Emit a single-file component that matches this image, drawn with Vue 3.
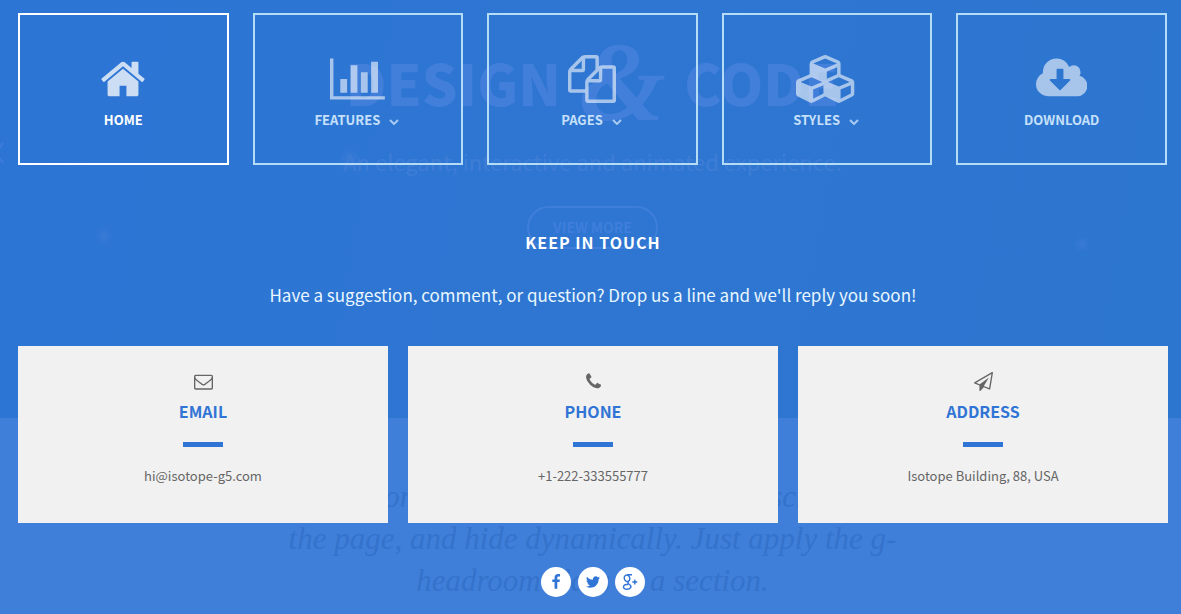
<script setup>
const navItems = [
  {
    label: 'Home', active: true, width: 1792,
    icon: 'M1472 992v480q0 26-19 45t-45 19h-384v-384h-256v384h-384q-26 0-45-19t-19-45v-480q0-1 .5-3t.5-3l575-474 575 474q1 2 1 6zm223-69l-62 74q-8 9-21 11h-3q-13 0-21-7l-692-577-692 577q-12 8-24 7-13-2-21-11l-62-74q-8-10-7-23.5t11-21.5l719-599q32-26 76-26t76 26l244 204v-195q0-14 9-23t23-9h192q14 0 23 9t9 23v408l219 182q10 8 11 21.5t-7 23.5z',
  },
  {
    label: 'Features', menu: true, width: 2048,
    icon: 'M640 896v512h-256v-512h256zm384-512v1024h-256v-1024h256zm1024 1152v128h-2048v-1536h128v1408h1920zm-640-896v768h-256v-768h256zm384-384v1152h-256v-1152h256z',
  },
  {
    label: 'Pages', menu: true, width: 1792,
    icon: 'M1696 384q40 0 68 28t28 68v1216q0 40-28 68t-68 28h-960q-40 0-68-28t-28-68v-288h-544q-40 0-68-28t-28-68v-672q0-40 20-88t48-76l408-408q28-28 76-48t88-20h416q40 0 68 28t28 68v328q68-40 128-40h416zm-544 213l-299 299h299v-299zm-640-384l-299 299h299v-299zm196 647l316-316v-416h-384v416q0 40-28 68t-68 28h-416v640h512v-256q0-40 20-88t48-76zm956 804v-1152h-384v416q0 40-28 68t-68 28h-416v640h896z',
  },
  {
    label: 'Styles', menu: true, width: 2304,
    icon: 'M640 1632l384-192v-314l-384 164v342zm-64-454l404-173-404-173-404 173zm1088 454l384-192v-314l-384 164v342zm-64-454l404-173-404-173-404 173zm-448-293l384-165v-266l-384 164v267zm-64-379l441-189-441-189-441 189zm1088 518v416q0 36-19 67t-52 47l-448 224q-25 14-57 14t-57-14l-448-224q-4-2-7-4-2 2-7 4l-448 224q-25 14-57 14t-57-14l-448-224q-33-16-52-47t-19-67v-416q0-38 21.5-70t56.5-48l434-186v-400q0-38 21.5-70t56.5-48l448-192q23-10 50-10t50 10l448 192q35 16 56.5 48t21.5 70v400l434 186q36 16 57 48t21 70z',
  },
  {
    label: 'Download', width: 1920,
    icon: 'M1280 928q0-14-9-23t-23-9h-224v-352q0-13-9.5-22.5t-22.5-9.5h-192q-13 0-22.5 9.5t-9.5 22.5v352h-224q-13 0-22.5 9.5t-9.5 22.5q0 14 9 23l352 352q9 9 23 9t23-9l351-351q10-12 10-24zm640 224q0 159-112.5 271.5t-271.5 112.5h-1088q-185 0-316.5-131.5t-131.5-316.5q0-130 70-240t188-165q-2-30-2-43 0-212 150-362t362-150q156 0 285.5 87t188.5 231q71-62 166-62 106 0 181 75t75 181q0 76-41 138 130 31 213.5 135.5t83.5 238.5z',
  },
]

const contacts = [
  {
    title: 'Email', text: 'hi@isotope-g5.com',
    icon: 'M1664 1504v-768q-32 36-69 66-268 206-426 338-51 43-83 67t-86.500 48.500-102.500 24.500h-2q-48 0-102.500-24.500t-86.500-48.500-83-67q-158-132-426-338-37-30-69-66v768q0 13 9.500 22.500t22.500 9.500h1472q13 0 22.500-9.500t9.500-22.500zm0-1051v-24.500l-.5-13-3-12.500-5.500-9-9-7.500-14-2.500h-1472q-13 0-22.500 9.500t-9.500 22.500q0 168 147 284 193 152 401 317 6 5 35 29.500t46 37.500 44.500 31.500 50.500 27.500 43 9h2q20 0 43-9t50.500-27.500 44.500-31.500 46-37.500 35-29.500q208-165 401-317 54-43 100.500-115.500t46.500-131.500zm128-37v1088q0 66-47 113t-113 47h-1472q-66 0-113-47t-47-113v-1088q0-66 47-113t113-47h1472q66 0 113 47t47 113z',
  },
  {
    title: 'Phone', text: '+1-222-333555777',
    icon: 'M1600 1240q0 27-10 70.500t-21 68.500q-21 50-122 106-94 51-186 51-27 0-53-3.500t-57.500-12.500-47-14.500-55.500-20.500-49-18q-98-35-175-83-127-79-264-216t-216-264q-48-77-83-175-3-9-18-49t-20.500-55.500-14.500-47-12.500-57.500-3.500-53q0-92 51-186 56-101 106-122 25-11 68.500-21t70.500-10q14 0 21 3 18 6 53 76 11 19 30 54t35 63.500 31 53.500q3 4 17.500 25t21.500 35.500 7 28.500q0 20-28.500 50t-62 55-62 53-28.500 46q0 9 5 22.500t8.500 20.500 14 24 11.500 19q76 137 174 235t235 174q2 1 19 11.500t24 14 20.500 8.500 22.500 5q18 0 46-28.500t53-62 55-62 50-28.500q14 0 28.500 7t35.500 21.500 25 17.500q25 15 53.500 31t63.500 35 54 30q70 35 76 53 3 7 3 21z',
  },
  {
    title: 'Address', text: 'Isotope Building, 88, USA',
    icon: 'M1764 11q33 24 27 64l-256 1536q-5 29-32 45-14 8-31 8-11 0-24-5l-527-215-298 327q-18 21-47 21-14 0-23-4-19-7-30-23.500t-11-36.500v-452l-472-193q-37-14-40-55-3-39 32-59l1664-960q35-21 68 2zm-342 1499l221-1323-1434 827 336 137 863-639-478 797z',
  },
]
</script>

<template>
  <div class="page">
    <div class="backdrop" aria-hidden="true">
      <section class="hero">
        <svg class="prev" viewBox="0 0 6 22"><path d="M3 1L-4 11L3 21" /></svg>
        <h1 class="hero-title"><span>DESIGN</span><span class="amp">&amp;</span><span>CODE</span></h1>
        <p class="hero-sub">An elegant, interactive and animated experience.</p>
        <span class="hero-more">VIEW MORE</span>
      </section>
      <section class="quote">
        <p class="quote-first"><span>headroom</span><span>scroll to</span></p>
        <p>the page, and hide dynamically. Just apply the g-</p>
        <p>headroom class to a section.</p>
      </section>
    </div>

    <div class="overlay">
      <nav class="nav">
        <a
          v-for="item in navItems"
          :key="item.label"
          href="#"
          class="tile"
          :class="{ active: item.active }"
        >
          <svg class="tile-icon" :viewBox="`0 0 ${item.width} 1792`" aria-hidden="true"><path :d="item.icon" /></svg>
          <span class="tile-label">
            {{ item.label }}
            <svg v-if="item.menu" class="chevron" viewBox="0 0 10 6" aria-hidden="true"><path d="M1 1L5 5L9 1" /></svg>
          </span>
        </a>
      </nav>

      <main>
        <h2 class="heading">Keep in touch</h2>
        <p class="lead">Have a suggestion, comment, or question? Drop us a line and we'll reply you soon!</p>
        <div class="cards">
          <article v-for="card in contacts" :key="card.title" class="card">
            <svg class="card-icon" viewBox="0 0 1792 1792" aria-hidden="true"><path :d="card.icon" /></svg>
            <h3>{{ card.title }}</h3>
            <p>{{ card.text }}</p>
          </article>
        </div>
      </main>

      <footer class="social">
        <a href="#" aria-label="Facebook">
          <svg viewBox="0 0 1792 1792"><path d="M1343 12v264h-157q-86 0-116 36t-30 108v189h293l-39 296h-254v759h-306v-759h-255v-296h255v-218q0-186 104-288.500t277-102.500q147 0 228 12z" /></svg>
        </a>
        <a href="#" aria-label="Twitter">
          <svg viewBox="0 0 1792 1792"><path d="M1684 408q-67 98-162 167 1 14 1 42 0 130-38 259.500t-115.500 248.500-184.500 210.500-258 146-323 54.500q-271 0-496-145 35 4 78 4 225 0 401-138-105-2-188-64.500t-114-159.500q33 5 61 5 43 0 85-11-112-23-185.500-111.500t-73.500-205.500v-4q68 38 146 41-66-44-105-115t-39-154q0-88 44-163 121 149 294.500 238.500t371.500 99.500q-8-38-8-74 0-134 94.500-228.500t228.500-94.500q140 0 236 102 109-21 205-78-37 115-142 178 93-10 186-50z" /></svg>
        </a>
        <a href="#" aria-label="Google Plus">
          <svg class="gplus" viewBox="0 0 16 16">
            <ellipse cx="5" cy="4.300" rx="2.700" ry="3.300" transform="rotate(-14 5 4.300)" />
            <path d="M10 .8H5M7 7.200C5.500 8.500 5.500 8.800 7 10C11 12.800 8 15.300 4.800 15.300C.2 15.300 0 10.200 6.400 10.200" />
            <path d="M12.800 5.500v5M10.300 8h5" />
          </svg>
        </a>
      </footer>
    </div>
  </div>
</template>

<style>
body {
  background: #3f7fda;
}
</style>

<style scoped>
.page {
  position: relative;
  min-height: 100vh;
  overflow: hidden;
  font-family: "Noto Sans CJK SC", "Noto Sans", sans-serif;
  text-align: center;
  color: #fff;
}

h1, h2, h3, p {
  margin: 0;
}

.backdrop {
  position: absolute;
  inset: 0;
  overflow: hidden;
  background: #3f7fda;
}

.hero {
  position: relative;
  box-sizing: border-box;
  height: 418px;
  padding: 40px 0 0 4px;
  background:
    radial-gradient(circle at 104px 236px, #397ad7 0, transparent 9px),
    radial-gradient(circle at 1082px 244px, #397ad7 0, transparent 8px),
    radial-gradient(circle at 350px 160px, #387ad7 0, transparent 12px),
    linear-gradient(100deg, #2d75d5, #2e76d1 50%, #2d76d0);
}

.prev {
  position: absolute;
  left: 0;
  top: 142px;
  width: 6px;
  height: 22px;
  fill: none;
  stroke: #3f7cd9;
  stroke-width: 2;
}

.hero-title {
  display: flex;
  justify-content: center;
  gap: 18px;
  font-size: 56px;
  line-height: 84px;
  font-weight: 900;
  color: #427fdb;
}

.amp {
  font-family: "Liberation Serif", serif;
  font-style: italic;
  font-weight: 700;
  font-size: 112px;
}

.hero-sub {
  margin-top: 19px;
  font-size: 22px;
  line-height: 36px;
  color: #3e7dd6;
}

.hero-more {
  display: inline-block;
  margin-top: 27px;
  padding: 0 24px;
  border: 2px solid #3f7fd9;
  border-radius: 22px;
  font-size: 14px;
  line-height: 39px;
  font-weight: 700;
  color: #3f7edc;
}

.quote {
  padding: 58px 0 0 4px;
  font-family: "Liberation Serif", serif;
  font-style: italic;
  font-size: 31px;
  line-height: 42px;
  color: #3572cb;
}

.quote-first {
  display: flex;
  justify-content: space-between;
  width: 574px;
  margin: 0 auto;
  padding-right: 16px;
}

.overlay {
  position: relative;
  padding: 13px 13px 17px 18px;
}

.nav {
  display: grid;
  grid-template-columns: repeat(5, 1fr);
  gap: 24px;
  padding-right: 1px;
}

.tile {
  display: flex;
  flex-direction: column;
  align-items: center;
  gap: 5px;
  padding: 40px 0 31px;
  border: 2px solid #b4dcf6;
  color: #c6e0fa;
  text-decoration: none;
}

.tile.active {
  border-color: #fff;
  color: #fff;
}

.tile-icon {
  height: 48px;
  fill: #fff;
  opacity: .58;
}

.active .tile-icon {
  opacity: .76;
}

.tile-label {
  display: flex;
  align-items: center;
  gap: 9px;
  font-size: 13px;
  line-height: 24px;
  font-weight: 700;
  text-transform: uppercase;
}

.chevron {
  width: 10px;
  height: 6px;
  margin: 4px 2px 0 0;
  fill: none;
  stroke: #a6c9f1;
  stroke-width: 2;
}

.heading {
  margin-top: 65px;
  font-size: 16px;
  line-height: 24px;
  font-weight: 700;
  letter-spacing: 1px;
  text-transform: uppercase;
}

.lead {
  margin-top: 27px;
  font-size: 17px;
  line-height: 28px;
  color: #e9f6ff;
}

.cards {
  display: grid;
  grid-template-columns: repeat(3, 1fr);
  gap: 20px;
  margin-top: 37px;
}

.card {
  display: flex;
  flex-direction: column;
  align-items: center;
  padding: 26px 0 35px;
  background: #f1f1f1;
  color: #666;
}

.card-icon {
  width: 19px;
  height: 19px;
  fill: #666;
}

.card h3 {
  margin-top: 8px;
  font-size: 16px;
  line-height: 24px;
  font-weight: 700;
  color: #3074d6;
  text-transform: uppercase;
}

.card h3::after {
  content: "";
  display: block;
  width: 40px;
  height: 5px;
  margin: 19px auto 0;
  background: #3074d6;
}

.card p {
  margin-top: 17px;
  font-size: 13px;
  line-height: 24px;
}

.social {
  display: flex;
  justify-content: center;
  gap: 7px;
  margin-top: 44px;
}

.social a {
  display: grid;
  place-items: center;
  width: 30px;
  height: 30px;
  border-radius: 50%;
  background: #fff;
}

.social svg {
  width: 16px;
  height: 16px;
  fill: #3074d6;
}

.social .gplus {
  fill: none;
  stroke: #3074d6;
  stroke-width: 1.4;
}
</style>
